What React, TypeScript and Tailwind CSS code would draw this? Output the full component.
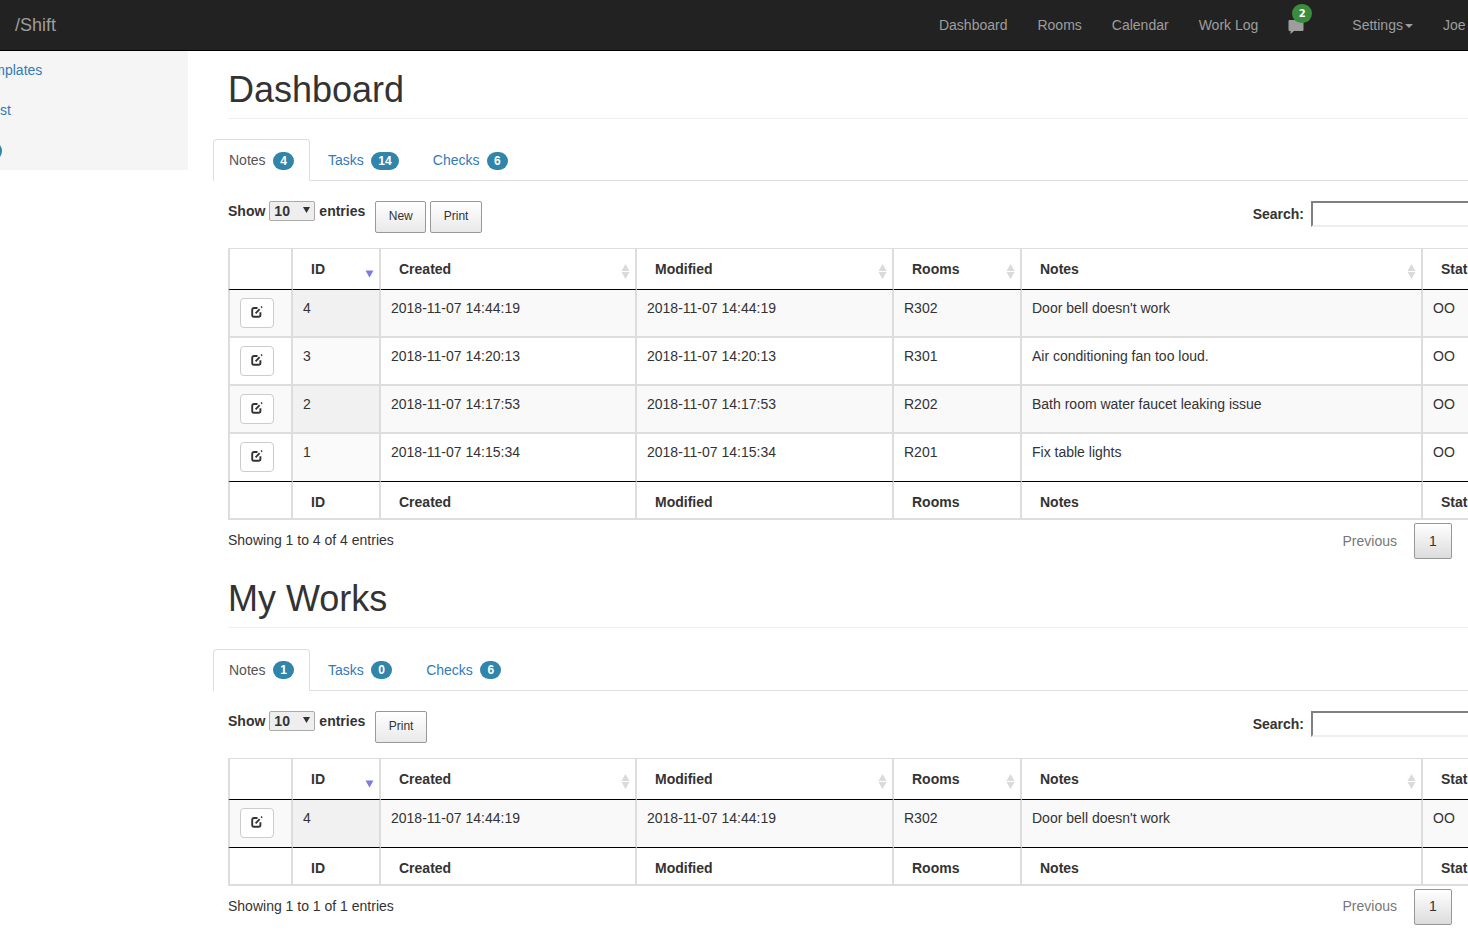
interface NoteRow {
  id: number
  date: string
  room: string
  note: string
}

interface TabInfo {
  label: string
  count: number
}

const dashboardRows: NoteRow[] = [
  { id: 4, date: "2018-11-07 14:44:19", room: "R302", note: "Door bell doesn't work" },
  { id: 3, date: "2018-11-07 14:20:13", room: "R301", note: "Air conditioning fan too loud." },
  { id: 2, date: "2018-11-07 14:17:53", room: "R202", note: "Bath room water faucet leaking issue" },
  { id: 1, date: "2018-11-07 14:15:34", room: "R201", note: "Fix table lights" },
]

const navLinks = ["Dashboard", "Rooms", "Calendar", "Work Log"]

function SortArrows() {
  return (
    <svg className="absolute right-[5px] top-[15px]" width="9" height="15" viewBox="0 0 9 15">
      <path d="M4.5 0 L8.5 7 H0.5 Z M0.5 8 H8.5 L4.5 15 Z" fill="#dadada" />
    </svg>
  )
}

function SortDown() {
  return (
    <svg className="absolute right-[5px] top-[21px]" width="9" height="8" viewBox="0 0 9 8">
      <path d="M0.5 0.5 H8.5 L4.5 7.5 Z" fill="#7d7de0" />
    </svg>
  )
}

function EditIcon() {
  return (
    <svg className="-mt-[2px]" width="12" height="12" viewBox="0 0 12 12" fill="none" stroke="#333">
      <path d="M6.5 2 H3 A1.8 1.8 0 0 0 1.2 3.8 V9 A1.8 1.8 0 0 0 3 10.8 H7.6 A1.8 1.8 0 0 0 9.4 9 V6.2" strokeWidth="1.9" />
      <path d="M4.6 7.4 L8.6 3.2" strokeWidth="1.9" />
      <path d="M10 1.6 L11.2 0.6" strokeWidth="1.4" />
    </svg>
  )
}

function HeaderCell({ label, className, children }: { label?: string; className: string; children?: React.ReactNode }) {
  return (
    <th className={`relative h-[42px] border-t border-r-2 border-b border-t-[#ddd] border-r-[#ddd] border-b-black pl-[18px] text-left font-bold ${className}`}>
      {label}
      {children}
    </th>
  )
}

function FooterCell({ label, className }: { label?: string; className: string }) {
  return (
    <th className={`h-[38px] border-r-2 border-b-2 border-[#ddd] pt-[10px] pb-[6px] pl-[18px] text-left font-bold ${className}`}>
      {label}
    </th>
  )
}

function NotesTable({ rows }: { rows: NoteRow[] }) {
  return (
    <table className="w-[1315px] table-fixed border-separate border-spacing-0 text-[14px] leading-[20px]">
      <colgroup>
        <col className="w-[65px]" />
        <col className="w-[88px]" />
        <col className="w-[256px]" />
        <col className="w-[257px]" />
        <col className="w-[128px]" />
        <col className="w-[401px]" />
        <col className="w-[120px]" />
      </colgroup>
      <thead>
        <tr>
          <HeaderCell className="border-l-2 border-l-[#ddd]" />
          <HeaderCell label="ID" className="">
            <SortDown />
          </HeaderCell>
          <HeaderCell label="Created" className="">
            <SortArrows />
          </HeaderCell>
          <HeaderCell label="Modified" className="">
            <SortArrows />
          </HeaderCell>
          <HeaderCell label="Rooms" className="">
            <SortArrows />
          </HeaderCell>
          <HeaderCell label="Notes" className="">
            <SortArrows />
          </HeaderCell>
          <HeaderCell label="Status" className="" />
        </tr>
      </thead>
      <tbody>
        {rows.map((row, i) => {
          const odd = i % 2 === 0
          const last = i === rows.length - 1
          const bottom = last ? "border-b border-b-black" : "border-b-2 border-b-[#ddd]"
          const bg = odd ? "bg-[#f9f9f9]" : "bg-white"
          const cell = `h-[48px] border-r-2 border-r-[#ddd] px-[10px] pt-[8px] align-top ${bottom} ${bg}`
          return (
            <tr key={row.id}>
              <td className={`${cell} border-l-2 border-l-[#ddd]`}>
                <button className="flex h-[30px] w-[34px] items-center justify-center rounded-[4px] border border-[#ccc] bg-white">
                  <EditIcon />
                </button>
              </td>
              <td className={`h-[48px] border-r-2 border-r-[#ddd] px-[10px] pt-[8px] align-top ${bottom} ${odd ? "bg-[#f1f1f1]" : "bg-[#fafafa]"}`}>
                {row.id}
              </td>
              <td className={cell}>{row.date}</td>
              <td className={cell}>{row.date}</td>
              <td className={cell}>{row.room}</td>
              <td className={cell}>{row.note}</td>
              <td className={cell}>OO</td>
            </tr>
          )
        })}
      </tbody>
      <tfoot>
        <tr>
          <FooterCell className="border-l-2" />
          <FooterCell label="ID" className="" />
          <FooterCell label="Created" className="" />
          <FooterCell label="Modified" className="" />
          <FooterCell label="Rooms" className="" />
          <FooterCell label="Notes" className="" />
          <FooterCell label="Status" className="" />
        </tr>
      </tfoot>
    </table>
  )
}

function GrayButton({ label }: { label: string }) {
  return (
    <button className="h-[32px] rounded-[2px] border border-[#999] bg-gradient-to-b from-white to-[#e9e9e9] px-[12.5px] pb-[2px] text-[12px] text-[#333]">
      {label}
    </button>
  )
}

function Section({ title, tabs, buttons, rows }: { title: string; tabs: TabInfo[]; buttons: string[]; rows: NoteRow[] }) {
  return (
    <section className="mb-[20px]">
      <h1 className="mb-[20.4px] ml-[15px] border-b border-[#eee] pb-[8.6px] text-[36px] leading-[39.6px] font-medium text-[#333]">
        {title}
      </h1>

      <div className="flex h-[42px] items-start gap-[2px] border-b border-[#ddd] text-[14px] leading-[20px]">
        {tabs.map((tab, i) => (
          <a
            key={tab.label}
            className={
              i === 0
                ? "-mb-px flex h-[42px] items-center gap-[7.5px] rounded-t-[4px] border border-[#ddd] border-b-white bg-white px-[15px] text-[#555]"
                : "flex h-[42px] items-center gap-[7.5px] border border-transparent px-[15px] text-[#337ab7]"
            }
          >
            {tab.label}
            <span className="mt-px min-w-[10px] rounded-[10px] bg-[#3184aa] px-[7.1px] py-[3px] text-[12px] leading-[12px] font-bold text-white">
              {tab.count}
            </span>
          </a>
        ))}
      </div>

      <div className="mt-[20px] ml-[15px] w-[1290px]">
        <div className="mb-[15px] flex h-[32px] items-start">
          <label className="flex h-[20px] items-center gap-[4px] text-[14px] leading-[20px] font-bold text-[#333]">
            Show
            <span className="relative h-[20px]">
              <select className="block h-[20px] w-[46px] appearance-none rounded-[2px] border border-[#aaa] bg-[#eee] pl-[4px] leading-[18px] font-bold text-[#333]">
                <option>10</option>
              </select>
              <svg className="absolute top-[6px] right-[5px]" width="7" height="6" viewBox="0 0 7 6">
                <path d="M0 0 H7 L3.5 6 Z" fill="#333" />
              </svg>
            </span>
            entries
          </label>
          <div className="ml-[10px] flex gap-[4px]">
            {buttons.map((b) => (
              <GrayButton key={b} label={b} />
            ))}
          </div>
          <label className="ml-auto flex h-[26px] items-center gap-[7px] text-[14px] leading-[20px] font-bold text-[#333]">
            Search:
            <input
              type="text"
              className="h-[26px] w-[207px] border-2 border-t-[#808080] border-r-[#eee] border-b-[#eee] border-l-[#808080] bg-white"
            />
          </label>
        </div>

        <NotesTable rows={rows} />

        <div className="flex w-[1224px] items-start justify-between">
          <div className="pt-[10px] text-[14px] leading-[20px] text-[#333]">
            Showing 1 to {rows.length} of {rows.length} entries
          </div>
          <div className="flex items-center gap-[17px] pt-[3px] text-[14px]">
            <span className="text-[#777]">Previous</span>
            <span className="flex h-[36px] w-[38px] items-center justify-center rounded-[2px] border border-[#979797] bg-gradient-to-b from-white to-[#dcdcdc] text-[#333]">
              1
            </span>
          </div>
        </div>
      </div>
    </section>
  )
}

export default function App() {
  return (
    <div className="h-[947px] w-[1468px] overflow-hidden bg-white text-[14px] text-[#333] [font-family:'Liberation_Sans',sans-serif]">
      <nav className="flex h-[51px] items-center border-b border-black bg-[#222] text-[14px] text-[#9d9d9d]">
        <a className="pl-[15px] text-[18px]">/Shift</a>
        <div className="ml-auto flex items-center pr-[2.5px]">
          <div className="flex gap-[30px]">
            {navLinks.map((link) => (
              <a key={link}>{link}</a>
            ))}
          </div>
          <a className="relative mt-[1px] ml-[30px] h-[16px] w-[16px]">
            <svg width="16" height="16" viewBox="0 0 16 16" className="mt-[1px]">
              <path d="M1.5 1 H14.5 A1 1 0 0 1 15.5 2 V11 A1 1 0 0 1 14.5 12 H6 L2.5 15 V12 H1.5 A1 1 0 0 1 0.5 11 V2 A1 1 0 0 1 1.5 1 Z" fill="#9d9d9d" />
            </svg>
            <span className="absolute -top-[14px] left-[4px] flex h-[19px] w-[20px] items-center justify-center rounded-full bg-[#3c8c3f] text-[10px] font-bold text-white [font-family:'DejaVu_Sans',sans-serif]">
              2
            </span>
          </a>
          <a className="ml-[48px] flex items-center">
            Settings
            <span className="mt-[2px] ml-[2px] h-0 w-0 border-x-[4px] border-t-[4px] border-x-transparent border-t-[#9d9d9d]" />
          </a>
          <a className="ml-[30px]">Joe</a>
        </div>
      </nav>

      <div className="flex items-start">
        <aside className="h-[119px] w-[188px] shrink-0 overflow-hidden bg-[#f5f5f5] text-[14px] leading-[20px] text-[#337ab7]">
          <div className="flex h-[38px] items-center">
            <a className="-ml-[21.5px]">Templates</a>
          </div>
          <div className="flex h-[42px] items-center">
            <a className="-ml-[11px]">List</a>
          </div>
          <div className="flex h-[39px] items-center">
            <span className="-ml-[18px] h-[20px] w-[20px] rounded-full bg-[#3184aa]" />
          </div>
        </aside>

        <main className="w-[1280px] shrink-0 pt-[18.5px] pl-[25px]">
          <Section
            title="Dashboard"
            tabs={[
              { label: "Notes", count: 4 },
              { label: "Tasks", count: 14 },
              { label: "Checks", count: 6 },
            ]}
            buttons={["New", "Print"]}
            rows={dashboardRows}
          />
          <Section
            title="My Works"
            tabs={[
              { label: "Notes", count: 1 },
              { label: "Tasks", count: 0 },
              { label: "Checks", count: 6 },
            ]}
            buttons={["Print"]}
            rows={dashboardRows.slice(0, 1)}
          />
        </main>
      </div>
    </div>
  )
}
